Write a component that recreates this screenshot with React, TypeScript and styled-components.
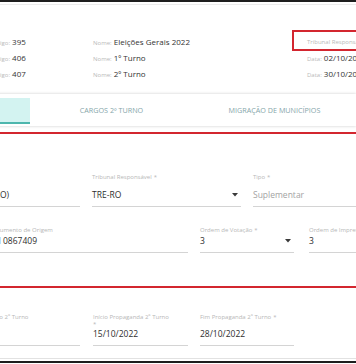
import React from 'react'
import styled, { createGlobalStyle } from 'styled-components'

const RED = '#d3262f'

const GlobalStyle = createGlobalStyle`
  html, body {
    margin: 0;
    padding: 0;
    background: #fff;
    overflow: hidden;
  }
  body {
    font-family: 'Open Sans', 'Liberation Sans', sans-serif;
    color: #333;
  }
`

const Frame = styled.div`
  width: 356px;
  height: 363px;
  box-sizing: border-box;
  border-top: 2px solid #1e1e1e;
  border-bottom: 2px solid #1e1e1e;
  overflow: hidden;
`

const Header = styled.div`
  margin-top: 2px;
  border-top: 1px solid #ececec;
  padding-top: 29px;
`

const InfoGrid = styled.div`
  display: grid;
  grid-template-columns: 104px 199px 1fr;
  grid-auto-rows: 16px;
  margin-left: -11px;
`

const InfoCell = styled.div<{ $indent?: number }>`
  white-space: nowrap;
  font-size: 8px;
  line-height: 16px;
  color: #333;
  padding-left: ${p => p.$indent ?? 0}px;
`

const InfoLabel = styled.span`
  font-size: 6px;
  color: #b9b9b9;
`

const HighlightBox = styled.div`
  border: 2px solid ${RED};
  margin: -4px -20px -1px 0;
  padding: 1px 0 0 13px;
  height: 16px;
  white-space: nowrap;
  font-size: 8px;
  line-height: 16px;
`

const TabBar = styled.div`
  margin-top: 12px;
  margin-left: -133px;
  height: 32px;
  box-sizing: border-box;
  padding-top: 4px;
  display: flex;
  box-shadow: 0 0 3px rgba(0, 0, 0, 0.2);
`

const Tab = styled.div<{ $active?: boolean }>`
  flex: 0 0 163px;
  height: 26px;
  box-sizing: border-box;
  display: flex;
  align-items: center;
  justify-content: center;
  font-size: 7.2px;
  text-transform: uppercase;
  color: #86a6aa;
  white-space: nowrap;
  background: ${p => (p.$active ? '#d3f3f1' : 'transparent')};
  border-bottom: 2px solid ${p => (p.$active ? '#4db6ad' : 'transparent')};
`

const FormSection = styled.div`
  margin-top: 6px;
  border-top: 2px solid ${RED};
  border-bottom: 2px solid ${RED};
  padding: 40px 0 33px;
`

const FieldRow = styled.div<{ $top?: number }>`
  display: flex;
  margin-top: ${p => p.$top ?? 0}px;
`

const Field = styled.div<{ $w: number; $offset: number }>`
  flex: 0 0 ${p => p.$w}px;
  margin-left: ${p => p.$offset}px;
  border-bottom: 1px solid #d4d4d4;
  padding-bottom: 5px;
`

const FieldLabel = styled.div<{ $h: number }>`
  height: ${p => p.$h}px;
  font-size: 6px;
  line-height: ${p => (p.$h >= 14 ? 7 : 8)}px;
  color: #b7b7b7;
  white-space: nowrap;
`

const RequiredMark = styled.span<{ $below?: boolean }>`
  display: ${p => (p.$below ? 'block' : 'inline')};
  margin-left: ${p => (p.$below ? 0 : 2)}px;
`

const FieldValue = styled.div<{ $placeholder?: boolean }>`
  display: flex;
  align-items: center;
  justify-content: space-between;
  height: 12px;
  padding-right: 3px;
  font-size: 8.5px;
  line-height: 12px;
  white-space: nowrap;
  color: ${p => (p.$placeholder ? '#a3a3a3' : '#2e2e2e')};
`

const Footer = styled.div`
  margin-top: 12px;
  border-top: 1px solid #e2e2e2;
`

const Caret = () => (
  <svg width="6" height="4" viewBox="0 0 6 4">
    <path d="M0 0h6L3 3.6z" fill="#3a3a3a" />
  </svg>
)

type FieldProps = {
  label: string
  value: string
  w: number
  offset: number
  labelH: number
  required?: boolean
  markBelow?: boolean
  select?: boolean
  placeholder?: boolean
}

const FormField = ({ label, value, w, offset, labelH, required, markBelow, select, placeholder }: FieldProps) => (
  <Field $w={w} $offset={offset}>
    <FieldLabel $h={labelH}>
      {label}
      {required && <RequiredMark $below={markBelow}>*</RequiredMark>}
    </FieldLabel>
    <FieldValue $placeholder={placeholder}>
      <span>{value}</span>
      {select && <Caret />}
    </FieldValue>
  </Field>
)

const rounds = [
  { code: '395', name: 'Eleições Gerais 2022', extra: null },
  { code: '406', name: '1º Turno', extra: '02/10/2022' },
  { code: '407', name: '2º Turno', extra: '30/10/2022' },
]

export default function App() {
  return (
    <>
      <GlobalStyle />
      <Frame>
        <Header>
          <InfoGrid>
            {rounds.map(r => (
              <React.Fragment key={r.code}>
                <InfoCell>
                  <InfoLabel>Código:</InfoLabel> {r.code}
                </InfoCell>
                <InfoCell>
                  <InfoLabel>Nome:</InfoLabel> {r.name}
                </InfoCell>
                {r.extra ? (
                  <InfoCell $indent={15}>
                    <InfoLabel>Data:</InfoLabel> {r.extra}
                  </InfoCell>
                ) : (
                  <HighlightBox>
                    <InfoLabel>Tribunal Responsável:</InfoLabel> TRE-RO
                  </HighlightBox>
                )}
              </React.Fragment>
            ))}
          </InfoGrid>
        </Header>

        <TabBar>
          <Tab $active>Cargos 1º Turno</Tab>
          <Tab>Cargos 2º Turno</Tab>
          <Tab>Migração de Municípios</Tab>
        </TabBar>

        <FormSection>
          <FieldRow>
            <FormField label="UF" value="Rondônia (RO)" w={128} offset={-48} labelH={15} required />
            <FormField label="Tribunal Responsável" value="TRE-RO" w={149} offset={12} labelH={15} required select />
            <FormField label="Tipo" value="Suplementar" w={150} offset={12} labelH={15} required placeholder />
          </FieldRow>
          <FieldRow $top={19}>
            <FormField label="Documento de Origem" value="SEI 0867409" w={199} offset={-11} labelH={9} />
            <FormField label="Ordem de Votação" value="3" w={94} offset={12} labelH={9} required select />
            <FormField label="Ordem de Impressão" value="3" w={100} offset={15} labelH={9} required />
          </FieldRow>
        </FormSection>

        <FieldRow $top={26}>
          <FormField label="Data Limite Cargo 2º Turno" value="14/10/2022" w={127} offset={-47} labelH={14} />
          <FormField label="Início Propaganda 2º Turno" value="15/10/2022" w={95} offset={13} labelH={14} required markBelow />
          <FormField label="Fim Propaganda 2º Turno" value="28/10/2022" w={94} offset={12} labelH={14} required />
        </FieldRow>

        <Footer />
      </Frame>
    </>
  )
}
